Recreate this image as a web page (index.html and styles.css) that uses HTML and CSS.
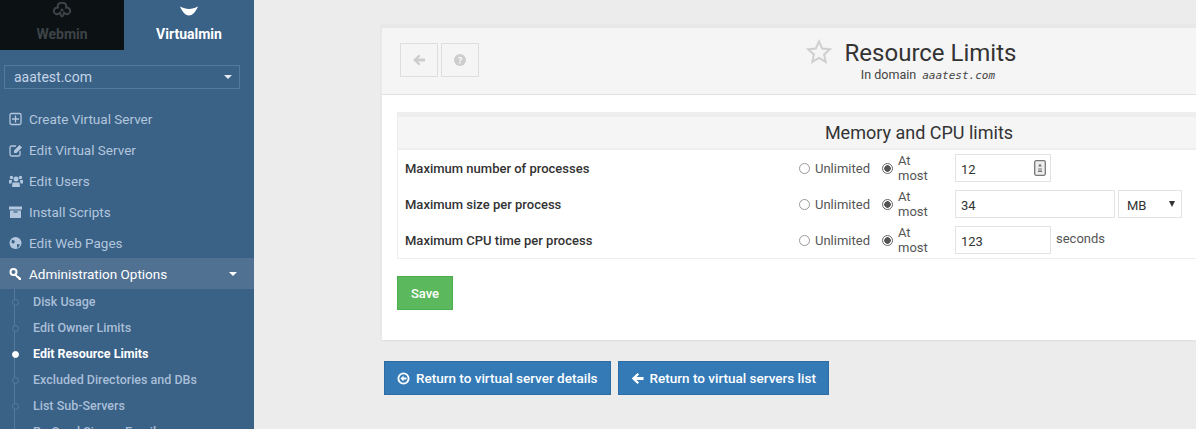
FILE: index.html
```html
<!DOCTYPE html>
<html lang="en">
<head>
<meta charset="utf-8">
<title>Resource Limits</title>
<link rel="stylesheet" href="styles.css">
</head>
<body>
<aside class="sidebar">
  <div class="tabs">
    <a class="tab tab-webmin">
      <svg class="tab-icon" viewBox="0 0 20 18" width="20" height="18"><path d="M7 1.5c1.5-.8 4.500-.8 6 0 1.300.8 1.500 2.500 1 4 1.500 0 3.500.8 4 2.500.5 2-.5 3.500-2 4-1.500.5-3-.2-4-1.200-.5 1.500-1 3.700-2 3.700s-1.500-2.200-2-3.700c-1 1-2.500 1.700-4 1.200-1.500-.5-2.500-2-2-4 .5-1.700 2.500-2.500 4-2.500-.5-1.500-.3-3.200 1-4z" fill="none" stroke="#3d4348" stroke-width="2"/><circle cx="10" cy="8" r="1.500" fill="#3d4348"/></svg>
      <span>Webmin</span>
    </a>
    <a class="tab tab-virtualmin">
      <svg class="tab-icon" viewBox="0 0 20 11" width="20" height="11"><path d="M1 1c3 1.500 6 2.500 9 2.500S16 2.500 19 1c-1.500 4-5 9-9 9S2.500 5 1 1z" fill="#fff"/></svg>
      <span>Virtualmin</span>
    </a>
  </div>
  <div class="domain-select"><span>aaatest.com</span><i class="caret"></i></div>
  <ul class="menu">
    <li class="menu-item"><svg class="menu-icon" viewBox="0 0 14 14"><rect x="1" y="1.500" width="11" height="11" rx="1.500" fill="none" stroke="currentColor" stroke-width="1.300"/><path d="M6.500 3.500v7M3 7h7" stroke="currentColor" stroke-width="1.300"/></svg>Create Virtual Server</li>
    <li class="menu-item"><svg class="menu-icon" viewBox="0 0 14 14"><path d="M7 3H2.500A1.500 1.500 0 0 0 1 4.500v7A1.500 1.500 0 0 0 2.500 13h7a1.500 1.500 0 0 0 1.500-1.500V8" fill="none" stroke="currentColor" stroke-width="1.300"/><path d="M5 7.500 10.500 2 13 4.500 7.500 10H5z" fill="currentColor"/></svg>Edit Virtual Server</li>
    <li class="menu-item"><svg class="menu-icon" viewBox="0 0 14 14"><circle cx="7" cy="5" r="2.500" fill="currentColor"/><circle cx="2.500" cy="3.500" r="1.700" fill="currentColor"/><circle cx="11.500" cy="3.500" r="1.700" fill="currentColor"/><path d="M3.500 8.500h7l.5 4.500H3zM0 6h3L2.500 9.500H0zM14 6h-3l.5 3.500H14z" fill="currentColor"/></svg>Edit Users</li>
    <li class="menu-item"><svg class="menu-icon" viewBox="0 0 14 14"><path d="M0 1.500h13v3H0zM1 5.500h11V13H1z" fill="currentColor"/><path d="M4.500 7h4" stroke="#3a6186" stroke-width="1.200"/></svg>Install Scripts</li>
    <li class="menu-item"><svg class="menu-icon" viewBox="0 0 14 14"><circle cx="6.500" cy="7" r="6" fill="currentColor"/><path d="M3 3.500l3 1.500-1 2.500-2.500-.5zM8 8l3 .5-2 3.500-1-1z" fill="#3a6186"/></svg>Edit Web Pages</li>
    <li class="menu-item menu-open"><svg class="menu-icon" viewBox="0 0 14 14"><circle cx="4.500" cy="5" r="3" fill="none" stroke="currentColor" stroke-width="2"/><path d="M6.500 7 12 11v2h-2L9 11.500 7.500 10.500 5.500 8" fill="currentColor"/></svg>Administration Options<i class="caret"></i></li>
  </ul>
  <ul class="submenu">
    <li>Disk Usage</li>
    <li>Edit Owner Limits</li>
    <li class="current">Edit Resource Limits</li>
    <li>Excluded Directories and DBs</li>
    <li>List Sub-Servers</li>
    <li>Re-Send Signup Email</li>
  </ul>
</aside>
<main class="main">
  <section class="panel">
    <header class="panel-head">
      <div class="head-buttons">
        <button class="icon-btn" type="button"><svg viewBox="0 0 14 14" width="14" height="14"><path d="M7 1.500 1 7l6 5.500 1.500-1.500L6 8.500h7v-3H6L8.500 3z" fill="#cdcdcd"/></svg></button>
        <button class="icon-btn" type="button"><svg viewBox="0 0 14 14" width="14" height="14"><circle cx="7" cy="7" r="6" fill="#cdcdcd"/><path d="M4.800 5.400C5 4.200 5.900 3.700 7 3.700c1.300 0 2.300.8 2.300 1.900 0 1.600-1.600 1.500-1.600 2.600H6.200c0-1.800 1.500-1.800 1.500-2.500 0-.4-.3-.7-.8-.7s-.8.3-.9.8zM6.200 9h1.500v1.500H6.200z" fill="#f5f5f5"/></svg></button>
      </div>
      <div class="head-title">
        <h1><svg class="star" viewBox="0 0 26 25" width="26" height="25"><path d="M13 2.500l3.200 7 7.600.8-5.700 5.100 1.600 7.500L13 19l-6.700 3.900 1.600-7.500-5.700-5.100 7.600-.8z" fill="none" stroke="#cfcfcf" stroke-width="2"/></svg>Resource Limits</h1>
        <p>In domain <tt>aaatest.com</tt></p>
      </div>
      <div class="head-side"></div>
    </header>
    <div class="panel-body">
      <div class="limits">
        <h2>Memory and CPU limits</h2>
        <div class="rows">
          <div class="row">
            <label class="row-label">Maximum number of processes</label>
            <div class="radios"><span class="radio"></span><span class="radio-text">Unlimited</span><span class="radio on"></span><span class="radio-text">At most</span></div>
            <div class="number-field"><input class="field small" type="text" value="12"><svg class="spin" viewBox="0 0 12 16" width="12" height="16"><rect x=".7" y=".7" width="10.600" height="14.600" rx="1.500" fill="#eee" stroke="#777" stroke-width="1.300"/><path d="M6 3.500 8 6.500H4zM4 8.500h4v1H4zM4 10.500h4v1.500H4z" fill="#777"/></svg></div>
          </div>
          <div class="row">
            <label class="row-label">Maximum size per process</label>
            <div class="radios"><span class="radio"></span><span class="radio-text">Unlimited</span><span class="radio on"></span><span class="radio-text">At most</span></div>
            <input class="field wide" type="text" value="34">
            <div class="unit"><span>MB</span><i></i></div>
          </div>
          <div class="row">
            <label class="row-label">Maximum CPU time per process</label>
            <div class="radios"><span class="radio"></span><span class="radio-text">Unlimited</span><span class="radio on"></span><span class="radio-text">At most</span></div>
            <input class="field small" type="text" value="123">
            <span class="suffix">seconds</span>
          </div>
        </div>
      </div>
      <button class="save" type="button">Save</button>
    </div>
  </section>
  <nav class="returns">
    <a class="return-btn"><svg viewBox="0 0 14 14" width="13" height="13"><circle cx="7" cy="7" r="5.500" fill="none" stroke="#fff" stroke-width="2"/><path d="M7 3.800 3.800 7 7 10.200V8h3.200V6H7z" fill="#fff"/></svg>Return to virtual server details</a>
    <a class="return-btn"><svg viewBox="0 0 14 14" width="13" height="13"><path d="M7 1 .8 7 7 13l1.700-1.700L6 8.500h7.500v-3H6l2.700-2.800z" fill="#fff"/></svg>Return to virtual servers list</a>
  </nav>
</main>
</body>
</html>
```
FILE: styles.css
```css
* { box-sizing: border-box; }
html, body { margin: 0; height: 429px; overflow: hidden; }
body { display: flex; background: #ececec; font-family: Roboto, sans-serif; font-size: 13px; color: #333; }

.sidebar { flex: 0 0 254px; height: 429px; overflow: hidden; background: #3a6186; color: #b3c7de; }
.tabs { display: flex; height: 50px; }
.tab { width: 124px; height: 50px; display: flex; flex-direction: column; align-items: center; font-size: 14px; font-weight: 700; }
.tab-icon { display: block; height: 18px; margin-top: 2px; margin-bottom: 6px; }
.tab-webmin { background: #0c1114; color: #3d4348; }
.tab-virtualmin { width: 130px; color: #fff; }
.tab-virtualmin .tab-icon { margin-top: 5px; height: 12px; margin-bottom: 9px; }

.domain-select { margin: 15px 0 0 4px; width: 236px; height: 24px; border: 1px solid #55799b; display: flex; align-items: center; justify-content: space-between; padding: 0 7px 0 9px; font-size: 14px; color: #c4d4e6; }
.caret { display: block; width: 0; height: 0; border-left: 4px solid transparent; border-right: 4px solid transparent; border-top: 4px solid #e4ebf2; }

.menu { list-style: none; margin: 14px 0 0; padding: 0; }
.menu-item { height: 31px; display: flex; align-items: center; padding-left: 9px; font-size: 13.500px; }
.menu-icon { width: 14px; height: 14px; margin-right: 6px; flex: none; }
.menu-open { background: #507191; color: #fff; }
.menu-open .caret { margin-left: auto; margin-right: 17px; border-top-color: #fff; }

.submenu { list-style: none; margin: 0 0 0 14px; padding: 0; border-left: 1px solid #55799b; }
.submenu li { position: relative; height: 26px; line-height: 26px; padding-left: 18px; font-size: 12.500px; font-weight: 500; color: #a9bfd8; white-space: nowrap; }
.submenu li::before { content: ""; position: absolute; left: -3px; top: 10px; width: 5px; height: 5px; border: 1px solid #5a7d9e; border-radius: 50%; background: #3a6186; }
.submenu li.current { color: #fff; font-weight: 700; }
.submenu li.current::before { background: #fff; border-color: #fff; }

.main { flex: 1; min-width: 0; padding: 28px 0 0 128px; overflow: hidden; }
.panel { width: 1074px; height: 312px; background: #fff; box-shadow: -2px -4px 0 #e8e8e8, 0 1px 2px #ddd; }
.panel-head { height: 67px; background: #f5f5f5; border-bottom: 1px solid #e2e2e2; display: grid; grid-template-columns: 1fr auto 1fr; padding-left: 18px; }
.head-buttons { display: flex; gap: 3px; padding-top: 15px; }
.icon-btn { width: 38px; height: 34px; padding: 0; border: 1px solid #dedede; background: #f5f5f5; display: flex; align-items: center; justify-content: center; }
.head-title { text-align: center; padding-top: 11px; }
.head-title h1 { margin: 0 34px 0 0; font-size: 24px; font-weight: 400; line-height: 28px; display: flex; align-items: center; justify-content: center; color: #333; white-space: nowrap; }
.star { margin-right: 13px; margin-top: -3px; }
.head-title p { margin: 1px 0 0; font-size: 12.500px; line-height: 14px; color: #444; }
.head-title tt { font-family: "DejaVu Sans Mono", monospace; font-style: italic; font-size: 11px; margin-left: 3px; }

.panel-body { padding: 17px 15px 0; }
.limits { border: 1px solid #eee; border-top: 5px solid #eee; border-bottom-width: 1px; }
.limits h2 { margin: 0; height: 33px; background: #f5f5f5; border-bottom: 2px solid #eee; font-size: 18px; font-weight: 400; line-height: 32px; text-align: center; color: #333; }
.rows { padding: 0 0 0 0; }
.row { height: 36px; display: flex; align-items: center; }
.row-label { width: 401px; padding-left: 7px; font-weight: 500; font-size: 13px; color: #333; flex: none; }
.radios { width: 156px; display: flex; align-items: center; flex: none; font-size: 13px; color: #555; }
.radio { width: 11px; height: 11px; border: 1px solid #999; border-radius: 50%; background: #fff; flex: none; }
.radio.on { border-color: #666; background: radial-gradient(circle, #555 0 3px, #fff 3.500px); }
.radio-text { margin-left: 5px; margin-right: 12px; }
.field { height: 28px; border: 1px solid #e3e3e3; background: #fff; font: 13px Roboto, sans-serif; color: #333; padding: 2px 5px 0; outline: 0; }
.field.small { width: 96px; }
.field.wide { width: 160px; }
.number-field { position: relative; display: flex; }
.spin { position: absolute; right: 5px; top: 6px; }
.unit { width: 64px; height: 28px; margin-left: 3px; border: 1px solid #e3e3e3; display: flex; align-items: center; justify-content: space-between; padding: 2px 6px 0 8px; color: #333; }
.unit i { width: 0; height: 0; border-left: 3.500px solid transparent; border-right: 3.500px solid transparent; border-top: 6px solid #333; margin-top: -2px; }
.suffix { margin-left: 5px; margin-top: -4px; color: #555; }
.save { display: block; margin-top: 17px; width: 56px; height: 34px; padding: 0; background: #5cb85c; border: 1px solid #4cae4c; color: #fff; font: 500 13px Roboto, sans-serif; }

.returns { display: flex; gap: 7px; margin: 21px 0 0 2px; }
.return-btn { height: 34px; display: flex; align-items: center; gap: 6px; padding: 0 12px; background: #337ab7; border: 1px solid #2e6da4; color: #fff; font-size: 13.500px; font-weight: 500; white-space: nowrap; }
```
